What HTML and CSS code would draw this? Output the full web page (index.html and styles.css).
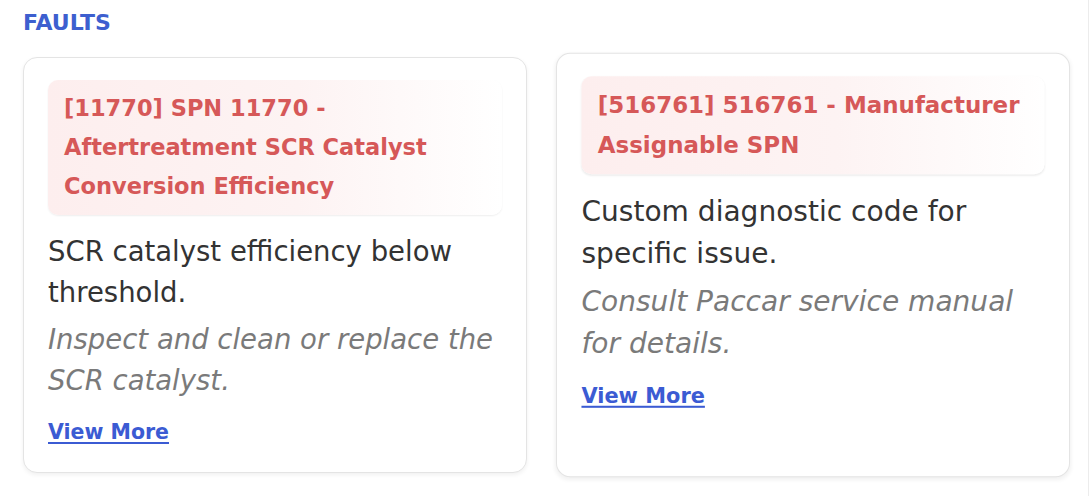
FILE: index.html
```html
<!DOCTYPE html>
<html lang="en">
<head>
<meta charset="utf-8">
<title>Faults</title>
<link rel="stylesheet" href="styles.css">
</head>
<body>
<div class="page">
  <h2 class="heading">FAULTS</h2>
  <div class="cards">
    <div class="card">
      <div class="fault-title">[11770] SPN 11770 - Aftertreatment SCR Catalyst Conversion Efficiency</div>
      <p class="desc">SCR catalyst efficiency below threshold.</p>
      <p class="action">Inspect and clean or replace the SCR catalyst.</p>
      <a class="more" href="#">View More</a>
    </div>
    <div class="card card-hover">
      <div class="fault-title">[516761] 516761 - Manufacturer Assignable SPN</div>
      <p class="desc">Custom diagnostic code for specific issue.</p>
      <p class="action">Consult Paccar service manual for details.</p>
      <a class="more" href="#">View More</a>
    </div>
  </div>
</div>
</body>
</html>
```

FILE: styles.css
```css
html, body {
  margin: 0;
  padding: 0;
  background: #ffffff;
}

body {
  font-family: "DejaVu Sans", "Liberation Sans", sans-serif;
  color: #333333;
}

.page {
  width: 1089px;
  height: 496px;
  box-sizing: border-box;
  padding: 10px 0 0 23px;
  border-right: 1px solid #ececec;
}

.heading {
  margin: 0;
  font-size: 22px;
  line-height: 25px;
  font-weight: bold;
  color: #3d5fcf;
}

.cards {
  margin-top: 22px;
  display: grid;
  grid-template-columns: 504px 504px;
  column-gap: 34px;
  align-items: stretch;
}

.card {
  border: 1px solid #e4e4e4;
  border-radius: 14px;
  box-shadow: 0 2px 4px rgba(0, 0, 0, 0.06);
  padding: 22px 24px 28px 24px;
  background: #ffffff;
}

.card-hover {
  transform: scale(1.02);
}

.fault-title {
  padding: 9px 16px;
  border-radius: 10px;
  background: linear-gradient(to right, #fdeeee 0%, #fdf3f3 55%, #ffffff 100%);
  box-shadow: 0 1px 2px rgba(0, 0, 0, 0.07);
  color: #d65858;
  font-size: 22.5px;
  line-height: 39px;
  font-weight: bold;
}

.desc {
  margin: 16px 0 0 0;
  font-size: 27.5px;
  line-height: 41px;
  color: #333333;
}

.action {
  margin: 6px 0 0 0;
  font-size: 27.5px;
  line-height: 41px;
  font-style: italic;
  color: #7a7a7a;
}

.more {
  display: inline-block;
  margin-top: 19px;
  font-size: 20.5px;
  line-height: 24px;
  font-weight: bold;
  color: #3b5bd3;
  text-decoration: underline;
  text-underline-offset: 3px;
}
```
